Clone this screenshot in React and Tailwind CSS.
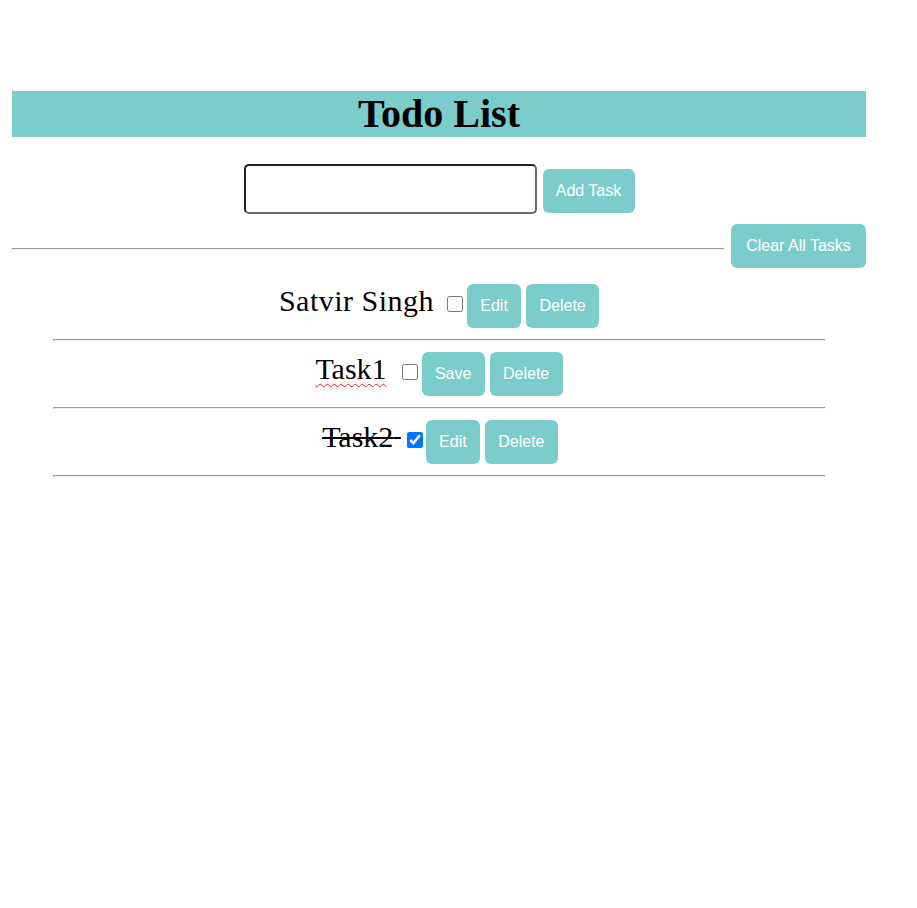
import React from "react";

const serif = { fontFamily: '"Liberation Serif", "Times New Roman", serif' };

function Btn({ w, children, className = "" }) {
  return (
    <button
      className={`h-[44px] rounded-[6px] bg-[#7bcdcc] text-white text-[16px] font-['Liberation_Sans',Arial,sans-serif] ${w} ${className}`}
    >
      {children}
    </button>
  );
}

function Hr({ className = "" }) {
  return (
    <div
      className={`h-[2px] border-t border-l border-t-[#9a9a9a] border-l-[#9a9a9a] border-b border-b-[#eeeeee] ${className}`}
    />
  );
}

function Row({ label, done, editing, action, aw, wide }) {
  return (
    <div className="flex justify-center items-baseline h-[44px]">
      <span
        className={`text-[30px] leading-[34.5px] text-black font-['Liberation_Serif','Times_New_Roman',serif] ${
          done ? "line-through decoration-[2px] ml-[2px]" : ""
        } ${editing ? "mr-[2.5px]" : ""} ${wide ? "tracking-[0.5px]" : ""}`}
      >
        <span
          className={
            editing
              ? "underline decoration-wavy decoration-[#e02020] decoration-[1px] underline-offset-[4px]"
              : ""
          }
        >
          {label}
        </span>
        {"\u00a0"}
      </span>
      <input
        type="checkbox"
        defaultChecked={done}
        className={`w-[16px] h-[16px] ${done ? "ml-[6px] mr-[3px]" : "ml-[5px] mr-[4px]"} mb-[4px] self-center`}
      />
      <Btn w={aw}>{action}</Btn>
      <Btn w="w-[73px]" className="ml-[5px]">
        Delete
      </Btn>
    </div>
  );
}

export default function App() {
  return (
    <div className="min-h-[908px] bg-white pt-[91px] pl-[12px] w-[866px]" style={serif}>
      <h1 className="h-[46px] leading-[46px] bg-[#7bcdcc] text-center font-bold text-[40px] text-black font-['Liberation_Serif','Times_New_Roman',serif]">
        Todo List
      </h1>
      <div className="mt-[27px] flex justify-center items-end">
        <input
          type="text"
          className="w-[293px] h-[50px] rounded-[5px] border-2 border-t-[#222222] border-l-[#222222] border-b-[#6b6b6b] border-r-[#6b6b6b] outline-none bg-white"
        />
        <Btn w="w-[92px]" className="ml-[6px] mb-[1px]">
          Add Task
        </Btn>
      </div>
      <div className="mt-[10px] flex items-center">
        <Hr className="flex-1 mt-[5px]" />
        <Btn w="w-[135px]" className="ml-[7px]">
          Clear All Tasks
        </Btn>
      </div>
      <div className="mx-[41px] mt-[16px]">
        <Row label="Satvir Singh" wide action="Edit" aw="w-[54px]" />
        <Hr className="mt-[11px] mb-[11px]" />
        <Row label="Task1" editing action="Save" aw="w-[63px]" />
        <Hr className="mt-[11px] mb-[11px]" />
        <Row label="Task2" done action="Edit" aw="w-[54px]" />
        <Hr className="mt-[11px] mb-[11px]" />
      </div>
    </div>
  );
}
